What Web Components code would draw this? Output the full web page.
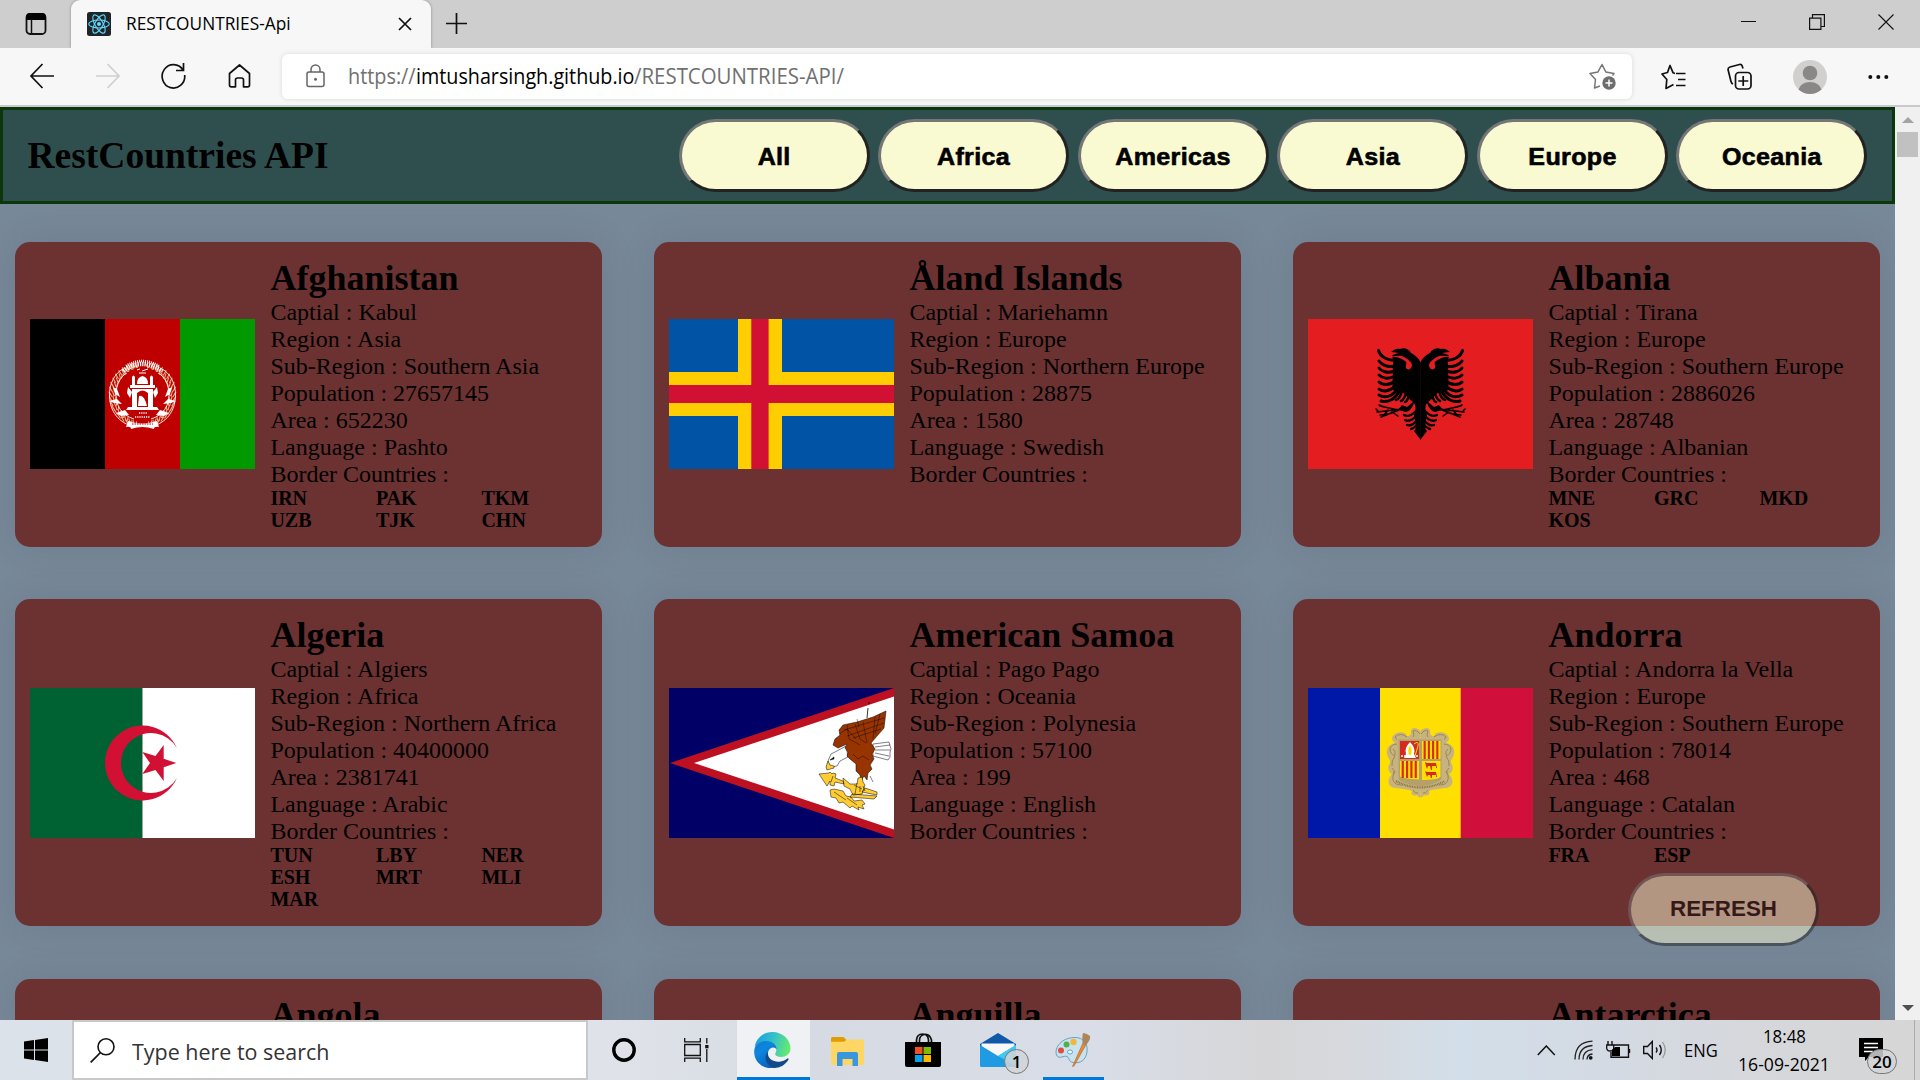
<!DOCTYPE html>
<html lang="en">
<head>
<meta charset="utf-8">
<title>RESTCOUNTRIES-Api</title>
<style>
html,body{margin:0;height:100%;overflow:hidden}
body{font-family:"Liberation Serif","Times New Roman",serif;color:#000}
</style>
</head>
<body>
<desktop-screen></desktop-screen>
<script>
const UI = '"Open Sans","Noto Sans",sans-serif';

function define(name, html, setup) {
  customElements.define(name, class extends HTMLElement {
    connectedCallback() {
      if (this.shadowRoot) return;
      const t = document.createElement('template');
      t.innerHTML = typeof html === 'function' ? html(this) : html;
      this.attachShadow({ mode: 'open' }).appendChild(t.content.cloneNode(true));
      if (setup) setup(this);
    }
  });
}

/* One line of text condensed or widened to a fixed advance width */
define('fit-text', `<style>
:host{display:block;white-space:pre;flex:none}
span{display:inline-block;transform-origin:0 50%}
</style><span><slot></slot></span>`, el => {
  const s = el.shadowRoot.querySelector('span');
  const w = +el.getAttribute('w');
  s.style.transform = `scaleX(${w / s.offsetWidth})`;
  el.style.width = w + 'px';
});

define('region-button', `<style>
:host{display:block;flex:none}
button{box-sizing:border-box;width:191px;height:73px;display:block;border-radius:37.5px;border:3px solid;
border-color:#767676 #222 #222 #767676;background:#fafad2;color:#000;padding:var(--drop,3px) 0 0;
font:bold var(--size,23px)/1 "Liberation Sans",Arial,sans-serif;letter-spacing:var(--track,.3px);-webkit-text-stroke:var(--stroke,.6px) #000}
span{display:inline-block;transform:scaleX(var(--wide,1.09))}
</style><button><span><slot></slot></span></button>`);

define('nav-bar', `<style>
:host{display:flex;box-sizing:border-box;height:97px;border:3px solid #0b370b;background:#2f4f4f;align-items:center;justify-content:space-between;padding:0 25px 0 24.5px}
h1{margin:0;font-size:37.5px;line-height:43px}
div{display:flex;gap:8.4px}
</style><h1>RestCountries API</h1><div>${['All','Africa','Americas','Asia','Europe','Oceania'].map(n => `<region-button>${n}</region-button>`).join('')}</div>`);

const eagleHalf = `
<path d="M112.7 44C111 39 107 36 103 34C101 30 96 28 92 30C88 29 86 31 83 33C87 33 89 34 91 34C88 35 85 35 84 37C89 37 93 36 96 38C99 40 103 42 104 46C104 50 100 52 98 49C97 46 100 44 97 42C94 40 88 37 84 38C87 41 84 46 85 52C85 58 84 66 85 71C89 74 93 72 97 75C100 79 102 81 105 83L99 88L94 86L90 91C93 92 95 92 98 93C102 92 104 89 106 84C108 86 108 92 106 96C107 104 110 108 106 112L112.7 121Z"/>
<g fill="none" stroke="#000" stroke-linecap="round" stroke-width="3">
<path d="M88 41C79 42 72 37 70.500 31.500M87 47C79 49 73 45 71 42M87 52C79 55 73 52 71 49M87 57C80 61 74 59 71 56M87 62C81 67 74 66 71 63M88 66C82 73 74 73 71 70M90 69C84 79 76 79 71 76M92 71C87 81 79 84 73 82"/>
<path stroke-width="2.600" d="M94 72Q92 80 88 81M98 74Q96 81 93 82M101 76Q99 83 97 83"/>
<path stroke-width="1.500" d="M94 90L69 93M90 91L72 87M91 91L73 98M70 92l-2-2M76 88l-5-2M79 95l-7 1M84 93l6 4M80 91l-4 5"/>
<path stroke-width="2.400" d="M108 92Q101 99 96 96M109 96Q102 104 97 101M110 100Q104 108 99 106M110 104Q107 109 103 110"/>
</g>`;

const wheat = Array.from({length:17}, (_, i) => {
  const a = (108 + i * 9.2) * Math.PI / 180, x = 112.5 + 30 * Math.cos(a), y = 76 + 30 * Math.sin(a);
  return `<path d="M${(x-3.6).toFixed(1)} ${(y-2.6).toFixed(1)}l3 5M${x.toFixed(1)} ${(y-3).toFixed(1)}l1.500 5M${(x+3.4).toFixed(1)} ${(y-2).toFixed(1)}l-1 4"/>`;
}).join('');
const afHalf = `<g fill="none" stroke="#e5b183" stroke-width="1.100">${wheat}</g>
<g fill="none" stroke="#fff" stroke-width=".9"><path d="M105 108C88 104 80 92 79.500 77C79 65 85 54 93 50M104 100C91 96 86 86 86 76C86 65 91 57 97 54"/></g>
<path fill="#fff" d="M83 68l4 2 3 8-5-3zM79 82l8-2 5 5-8-1zM86 94l9-3 4 5-8 1zM98 68l4 5-2 6-3-5z"/>`;

const stripes = (x, y, w, h, n) => `<path fill="#d52b1e" d="${Array.from({length:n}, (_, i) => `M${x + (i*2+1)*w/(2*n+1)} ${y}h${w/(2*n+1)}v${h}h-${w/(2*n+1)}z`).join('')}"/>`;
const andHalf = `<path d="M112.500 43C107 38 102 40 103 45C102 49 98 49 98 46C94 43 86 44 84 50C84 53 86 54 87 55C81 56 78 61 79 66C80 71 83 72 82 75C79 79 80 84 84 86C79 91 79 99 87 100C94 101 100 101 104 103C102 108 107 108 109 107C110 109 112 110 112.500 109Z"/>
<path fill="none" stroke="#9c874c" d="M112 46q-4-5-7-3q2 4 0 6M99 49q-7-5-12 0q2 4 5 4M90 56q-7 0-8 5q0 5 5 7q-4 5-3 10M87 83q-5 8 1 13q5 2 12 1M105 102q2 4 5 3M85 61q3 2 2 6M84 80q3 2 2 6"/>`;

const FLAGS = {
  af: `<path d="M0 0h75v150H0z"/><path fill="#bf0000" d="M75 0h75v150H75z"/><path fill="#090" d="M150 0h75v150h-75z"/>
    ${afHalf}<g transform="matrix(-1 0 0 1 225 0)">${afHalf}</g>
    <g fill="none" stroke="#fff"><path stroke-width="4.500" stroke-dasharray="1.300 1" d="M93 52Q112 38 132 52"/><path stroke-width="2.500" stroke-dasharray="1 1" d="M96 47Q112 37 129 47"/><path d="M107 51l3-1m2 2l6-2m-9 4h7"/></g>
    <path fill="#fff" d="M107 65q0-7 5.500-8q5.500 1 5.500 8zM102 58q1.500-3 3 0v8h-3zM120 58q1.500-3 3 0v8h-3zM100 66h25v3h-25zM102 70h5v18h-5zM118 70h5v18h-5zM107 70h11v4q-5.500-5-11 0zM98 88h29l2 3H96zM109 77q5-2 8 10h-9z"/>
    <path stroke="#fff" stroke-width="1.600" stroke-dasharray="1.200 1" d="M109 94h8M105 98h15"/>
    <path fill="#fff" d="M98 102q14 5 29 0l2 6q-5-1-5 2q-12-4-23 0q0-3-5-2z"/><path stroke="#bf0000" stroke-dasharray="1.500 1" d="M102 105h21"/>`,
  ax: `<path fill="#0053a5" d="M0 0h225v150H0z"/><path fill="#ffce00" d="M69 0h44v53h112v44H113v53H69V97H0V53h69z"/><path fill="#d21034" d="M82.300 0h17.300v66H225v18H99.600v66H82.300V84H0V66h82.300z"/>`,
  al: `<path fill="#e41e20" d="M0 0h225v150H0z"/>${eagleHalf}<g transform="matrix(-1 0 0 1 225 0)">${eagleHalf}</g>`,
  dz: `<path fill="#006233" d="M0 0h112.500v150H0z"/><path fill="#fff" d="M112.500 0H225v150H112.500z"/>
    <path fill="#d21034" d="M146.900 60A37.500 37.500 0 1 0 146.900 90A30 30 0 1 1 146.900 60zM146.300 75L133.700 79.200L133.700 93L125.500 82L112.300 86L120 75L112.300 64L125.500 68L133.700 57L133.700 70.800Z"/>`,
  as: `<path fill="#006" d="M0 0h225v150H0z"/><path fill="#bd1021" d="M1 75L225 0v150z"/><path fill="#fff" d="M25 75L225 8.500v133z"/>
    <g stroke="#000" stroke-width=".5" stroke-linejoin="round">
    <path fill="#fff" d="M204 56l16-2 2 7-1 3v5l-2 3-15-4z"/><path fill="none" d="M206 59l15-2M206 62l15 0M206 65l14 3"/>
    <path fill="#fff" d="M177 58l-9 5-6 3-3 7 2 6 7-1 3-5 8-4z"/><path d="M161 72l4-3v2z"/>
    <path fill="#fc3" d="M159 73l-2 6 1 3 7-2v-2l-4-1z"/>
    <path fill="#983400" d="M217 23L215 40L208 48L202 55L206 61L203 66L205 71L201 77L203 81L199 85L198 92L195 88L192 93L191 87L187 83L187 76L181 71L178 68L179 64L176 60L178 56L169 60L164 57L166 51L171 47L170 42L174 37L188 34L204 29Z"/>
    <path fill="none" stroke-width=".4" d="M170 46l8-5 9 10M178 37l2 14 11 6M186 36l5 15 6 4M194 34l4 21M206 29l-2 22M211 26l-5 20M175 42l40-12M178 48l37-13M184 50l28-9M184 66l5 5 5-3 6 4M188 31l2 8"/>
    <path fill="none" stroke-width=".8" d="M200 14v2M199 20l-1 10"/>
    <path fill="#fc3" d="M189 90l4-1 1 5 2 3-3 9-9 1-3-6-6-3-1-8 7 6 7 0zM150 86l10-1 1-1 2 2 1-1 3 1-1 4 8 3 1 3-9-2-1 4-4-1v-4l-3 5zM161 102l4-1 9 2 3 5 5 1 3 4 8-1 3 4-3 1 2 4-6-2 1 3-7-4-2 2-7-6-4 1-3-5-5-1zM183 106l25 2-3 3-24-2zM196 100l12 4v3l-15-3z"/>
    <path fill="none" d="M165 104l12 8M178 110l10 7M185 97l8 4M188 95l-2 11M164 88l-2 6M191 98v6M194 98l2 5M201 88l3 6"/></g>`,
  ad: `<path fill="#0018a8" d="M0 0h72v150H0z"/><path fill="#ffdf00" d="M72 0h81v150H72z"/><path fill="#d0103a" d="M152.700 0H225v150h-72.300z"/>
    <g fill="#c7b37f">${andHalf}<g transform="matrix(-1 0 0 1 225 0)">${andHalf}</g><path d="M89 50h47v44q-22 18-47 0z"/></g>
    <path fill="#b5a06a" d="M90.500 51.500h43v39q-2 5-21 8q-20-3-22-8z"/>
    <path fill="#d52b1e" d="M92 53h19v18H92z"/><path fill="#ffdf00" d="M114 53h18.500v18H114zM92 73h19v18.500q-17-1-19-3zM114 73h18.500v16q-3 3-18.500 3z"/>
    ${stripes(113.5,53,19,18,4)}${stripes(91.5,73,19.500,17,4)}
    <path fill="#fff" d="M102 54q6 6 4 12l2 4h-12l2-4q-2-6 4-12z"/><path fill="#ffdf00" d="M102 57q3 5 1 10h-2q-2-5 1-10z"/><path stroke="#fff" stroke-width="1.500" stroke-dasharray="2 1" d="M93 68h17"/><path fill="none" stroke="#ffdf00" d="M106 56q5-4 4 2l-3 10"/>
    <path fill="#d52b1e" d="M117 74l2 1 9 0 1 5h-1v-2l-4 0 0 4h-1l-1-4-2 0-1 3-1-3zM117 83l2 1 9 0 1 5h-1v-2l-4 0 0 3h-1l-1-3-2 0-1 2-1-3z"/>
    <path fill="none" stroke="#8c7740" stroke-width="2.200" stroke-dasharray="1 .7" d="M88 93Q112 106 137 93"/>`
};

define('country-card', el => {
  const d = (el.dataset.info || '').split('|'), keys = ['Captial','Region','Sub-Region','Population','Area','Language'];
  const borders = (el.dataset.borders || '').split(' ').filter(Boolean);
  return `<style>
:host{display:grid;box-sizing:border-box;grid-template-columns:225px 316px;gap:15.4px;padding:15px;border-radius:15px;background:#6c3232;align-items:center;box-shadow:0 0 40px rgba(0,0,0,.09)}
svg{display:block;width:225px;height:150px}
:host([short]) svg{margin-bottom:1px}
.info{align-self:start}
h2{margin:0;padding-top:1px;font-size:36px;line-height:41px;white-space:nowrap}
p{margin:0;font-size:24px;line-height:27px;white-space:nowrap}
.b{display:grid;grid-template-columns:repeat(3,105.500px);font-size:20px;line-height:22px;font-weight:bold;margin-top:-1px}
</style><svg viewBox="0 0 225 150">${FLAGS[el.dataset.flag]}</svg>
<div class="info"><h2>${el.dataset.name}</h2>${keys.map((k, i) => `<p>${k} : ${d[i] || ''}</p>`).join('')}<p>Border Countries :</p>
<div class="b">${borders.map(b => `<span>${b}</span>`).join('')}</div></div>`;
});

const COUNTRIES = [
  ['af','Afghanistan','Kabul|Asia|Southern Asia|27657145|652230|Pashto','IRN PAK TKM UZB TJK CHN'],
  ['ax','Åland Islands','Mariehamn|Europe|Northern Europe|28875|1580|Swedish',''],
  ['al','Albania','Tirana|Europe|Southern Europe|2886026|28748|Albanian','MNE GRC MKD KOS'],
  ['dz','Algeria','Algiers|Africa|Northern Africa|40400000|2381741|Arabic','TUN LBY NER ESH MRT MLI MAR'],
  ['as','American Samoa','Pago Pago|Oceania|Polynesia|57100|199|English',''],
  ['ad','Andorra','Andorra la Vella|Europe|Southern Europe|78014|468|Catalan','FRA ESP']
];
/* The third row shows only the top of its cards */
define('card-peek', el => `<style>
:host{display:block;height:60px;margin-top:1px;box-sizing:border-box;padding:16px 0 0 255.400px;border-radius:15px 15px 0 0;background:#6c3232;box-shadow:0 0 40px rgba(0,0,0,.09)}
h2{margin:0;font-size:36px;line-height:41px}
</style><h2>${el.dataset.name}</h2>`);

define('country-grid', `<style>
:host{display:grid;grid-template-columns:repeat(3,587px);grid-template-rows:305px 327px auto;gap:52px;padding:38px 15px 0;align-content:start}
</style>${COUNTRIES.map((c, i) => `<country-card ${i < 3 ? 'short' : ''} data-flag="${c[0]}" data-name="${c[1]}" data-info="${c[2]}" data-borders="${c[3]}"></country-card>`).join('')}
${['Angola','Anguilla','Antarctica'].map(n => `<card-peek data-name="${n}"></card-peek>`).join('')}`);

define('page-scrollbar', `<style>
:host{display:flex;flex-direction:column;align-items:center;width:25px;flex:none;background:#f0f0f0;box-sizing:border-box;padding:10px 0 9px}
i{width:21px;height:25px;background:#c1c1c1;margin-top:9px}
.s{flex:1}svg{display:block}
</style><svg width="12" height="6"><path fill="#a3a3a3" d="M0 6L6 0l6 6z"/></svg><i></i><div class="s"></div><svg width="12" height="6"><path fill="#505050" d="M0 0h12L6 6z"/></svg>`);

define('web-page', `<style>
:host{display:flex;height:913px;overflow:hidden;background:#789}
main{flex:1;position:relative;overflow:hidden}
.refresh{position:absolute;left:1628px;top:766px;opacity:.5;--size:22.4px;--track:0;--stroke:0;--wide:1;--drop:0px}
</style><main><nav-bar></nav-bar><country-grid></country-grid><region-button class="refresh">REFRESH</region-button></main><page-scrollbar></page-scrollbar>`);

define('tab-strip', `<style>
:host{display:flex;height:48px;background:#cecece;align-items:stretch}
svg{display:block;flex:none;fill:none;stroke:#111}
.act{width:71px;display:flex;align-items:center;justify-content:center;box-sizing:border-box;padding-left:1px}
.tab{width:360px;box-sizing:border-box;background:#f7f7f7;border-radius:9px 9px 0 0;display:flex;align-items:center;padding:0 19px 0 16px;box-shadow:0 0 3px rgba(0,0,0,.35);clip-path:inset(0 -4px 0 -4px)}
fit-text{font:18px/24px ${UI};margin:-2px 0 0 15px}
.g{flex:1}.plus{margin:auto 0 auto 15px;position:relative;top:-1px}
.win{display:flex;align-items:center;gap:53px;padding-right:26px;height:43px}
</style><div class="act"><svg width="22" height="24" viewBox="0 0 22 24"><rect x="1.500" y="2" width="19" height="20" rx="3.500" stroke-width="1.800"/><path fill="#000" stroke="none" d="M1 8V5q0-4 4-4h12q4 0 4 4v3z"/><path stroke-width="1.500" d="M6.500 7v15"/></svg></div>
<div class="tab"><svg width="24" height="24" viewBox="0 0 24 24"><rect width="24" height="24" rx="2.500" fill="#20232a" stroke="none"/><g stroke="#61dafb" stroke-width="1.100"><ellipse cx="12" cy="12" rx="10.300" ry="4"/><ellipse cx="12" cy="12" rx="10.300" ry="4" transform="rotate(60 12 12)"/><ellipse cx="12" cy="12" rx="10.300" ry="4" transform="rotate(120 12 12)"/></g><circle cx="12" cy="12" r="2" fill="#61dafb" stroke="none"/></svg>
<fit-text w="165">RESTCOUNTRIES-Api</fit-text><div class="g"></div><svg width="14" height="14" viewBox="0 0 14 14"><path stroke-width="1.700" d="M1 1l12 12M13 1L1 13"/></svg></div>
<svg class="plus" width="21" height="21" viewBox="0 0 21 21"><path stroke-width="1.700" d="M10.500 0v21M0 10.500h21"/></svg>
<div class="g"></div><div class="win"><svg width="16" height="16"><path d="M1 7.500h15"/></svg><svg width="16" height="16"><path stroke-width="1.200" d="M.6 4.100h11.300v11.300H.6zM3.500 4V.6h11.900v11.900H12"/></svg><svg width="16" height="16"><path stroke-width="1.100" d="M.5.5l15 15M15.500.5l-15 15"/></svg></div>`);

define('address-toolbar', `<style>
:host{display:flex;box-sizing:border-box;height:59px;background:#f7f7f7;border-bottom:2px solid #c9cacb;align-items:center;padding-left:30px;padding-right:31px}
svg{display:block;flex:none;fill:none;stroke:#111;stroke-width:1.7}
.nav{display:flex;gap:41.700px;width:252px;margin-top:-1px}
.box{width:1350px;box-sizing:border-box;height:45px;border-radius:6px;background:#fff;box-shadow:0 0 5px rgba(0,0,0,.12);display:flex;align-items:center;padding:0 16px 0 24px;margin-top:-1px}
.url{display:flex;font:21px/30px ${UI};margin-left:23px;flex:1;color:#707070}.url b{font-weight:400;color:#000}
.r{display:flex;align-items:center;flex:1;justify-content:space-between;padding-left:29px}
</style><div class="nav"><svg width="24" height="26" viewBox="0 0 24 26"><path d="M24 13H1M12.500 1L1 13l11.500 12"/></svg>
<svg width="24" height="26" viewBox="0 0 24 26" style="stroke:#d0d0d0"><path d="M0 13h23M11.500 1L23 13 11.500 25"/></svg>
<svg width="25" height="26" viewBox="0 0 25 26"><path d="M22 7A11.300 11.700 0 1 0 23.700 12M22.500 0v7.500H15"/></svg>
<svg width="23" height="26" viewBox="0 0 23 26"><path stroke-linejoin="round" d="M1.500 10.500L11.500 2l10 8.500V22q0 1.800-1.800 1.800h-4.200V17q0-2-2-2h-4q-2 0-2 2v6.800H3.300q-1.800 0-1.800-1.800z"/></svg></div>
<div class="box"><svg width="19" height="24" viewBox="0 0 19 24" style="stroke:#666;stroke-width:1.500"><rect x="1" y="8" width="17" height="14.500" rx="2"/><path d="M5 8V5.500a4.500 4.500 0 0 1 9 0V8"/><circle cx="9.500" cy="15.200" r="1.500" fill="#666" stroke="none"/></svg>
<div class="url"><fit-text w="68">https://</fit-text><fit-text w="218"><b>imtusharsingh.github.io</b></fit-text><fit-text w="210">/RESTCOUNTRIES-API/</fit-text></div>
<svg width="27" height="27" viewBox="0 0 27 27" style="stroke:#767676;stroke-width:1.500"><path stroke-linejoin="round" d="M11 23L5.500 25l1-8.500L1 10.500l8-1.600L13 1.500l3.800 7.400L25 10.500l-1.500 2"/><circle cx="20" cy="20" r="6.700" fill="#6e6e6e" stroke="none"/><path stroke="#fff" d="M20 16.500v7M16.500 20h7"/></svg></div>
<div class="r"><svg width="25" height="26" viewBox="0 0 25 26"><path stroke-linejoin="round" d="M14 9.500l-2-.8L9 1.500 6.500 8.500 1 10l4.800 5.500L5 24.500l7.500-4M15 9.500h9.500M17 15.500h7.500M15 21.500h9.500"/></svg>
<svg width="25" height="28" viewBox="0 0 25 28"><rect x="8.500" y="9.500" width="15.500" height="16.500" rx="3.500"/><path d="M16.200 13v10M11.300 18h10M16 5.500l-.8-2.500q-.7-2-2.700-1.500L3 4Q.5 4.800 1.200 7.200L4 18.500q.5 2 2 2.500"/></svg>
<svg width="34" height="34" viewBox="0 0 34 34" stroke="none"><g stroke="none"><circle cx="17" cy="17" r="17" fill="#d2d0ce"/><circle cx="17" cy="13" r="7.300" fill="#8a8886"/><path fill="#8a8886" d="M5.500 29.500Q8 22 17 22t11.500 7.500Q23 34 17 34T5.500 29.500z"/></g></svg>
<svg width="21" height="6" viewBox="0 0 21 6"><g fill="#111" stroke="none"><circle cx="2.300" cy="3" r="2"/><circle cx="10.300" cy="3" r="2"/><circle cx="18.300" cy="3" r="2"/></g></svg></div>`);

define('task-cell', `<style>
:host{display:flex;width:72px;height:60px;box-sizing:border-box;align-items:center;justify-content:center;position:relative;flex:none}
:host([app]){width:73px;margin-right:2px;padding-right:2px}
:host([active]){background:#f0f1f5;border-bottom:3px solid #0078d7;padding-top:3px}
:host([open])::after{content:"";position:absolute;left:6px;width:61px;bottom:0;height:3px;background:#0078d7}
::slotted(svg){display:block;fill:none}
</style><slot></slot>`);

define('count-badge', `<style>
:host{position:absolute;box-sizing:border-box;height:25px;border:1px solid #777;border-radius:13px;background:rgba(210,211,215,.85);display:flex;align-items:center;justify-content:center;font:600 17px/24px ${UI}}
</style><slot></slot>`);

define('task-bar', `<style>
:host{display:flex;height:60px;align-items:center;background:linear-gradient(90deg,#dce2e9 0,#dfe3e9 32%,#d6dae2 42%,#d8dde7 57%,#d6d6d8 66%,#d7d9dd 70%,#d2dee9 76%,#d4dae3 84%,#d6d7da 93%,#d6d6d6)}
svg{display:block;flex:none;fill:none}
.search{width:516px;height:60px;box-sizing:border-box;background:#fff;border:2px solid #c8c8c8;display:flex;align-items:center;padding-left:16px}
.search fit-text{font:22px/30px ${UI};color:#333;margin:2px 0 0 17px}
.tray{display:flex;align-items:center;flex:1;padding-left:425px;height:60px}
.clock{width:92px;margin-left:20px;display:flex;flex-direction:column;align-items:center;font:18px/27px ${UI};gap:1px}
.tray .lang{font:18.500px/26px ${UI};margin-left:17px}
.ac{position:relative;margin-left:29px;width:55px}
.end{width:1px;height:60px;background:#aaa}
</style>
<task-cell><svg width="24" height="24" viewBox="0 0 24 24"><path fill="#000" d="M0 3.500L10 2v9.500H0zM11 1.900L24 0v11.500H11zM0 12.500h10V22L0 20.500zM11 12.500h13V24l-13-1.900z"/></svg></task-cell>
<div class="search"><svg width="25" height="25" viewBox="0 0 25 25"><circle cx="16" cy="8.800" r="8" stroke="#111" stroke-width="1.600"/><path stroke="#111" stroke-width="1.700" d="M10.500 14.500L.7 24.300"/></svg><fit-text w="197">Type here to search</fit-text></div>
<task-cell><svg width="24" height="24"><circle cx="12" cy="12" r="10.200" stroke="#000" stroke-width="3.400"/></svg></task-cell>
<task-cell style="margin-right:5px"><svg width="25" height="24" viewBox="0 0 25 24"><path stroke="#111" stroke-width="1.300" d="M.7 0v3.800h15.600V0M.7 6.500h15.600v11H.7zM.7 24v-3.800h15.600V24M22.800 0v5.500M22.800 11v13"/><path fill="#111" d="M21.200 7h3.300v3.300h-3.300z"/></svg></task-cell>
<task-cell app active><svg width="37" height="36" viewBox="0 0 37 36"><defs><linearGradient id="e1" x1="0" y1=".3" x2="1" y2=".5"><stop stop-color="#1b9de2"/><stop offset=".5" stop-color="#35c1c9"/><stop offset="1" stop-color="#66eb6e"/></linearGradient><linearGradient id="e2" x1="0" y1="0" x2=".6" y2="1"><stop stop-color="#0d78d0"/><stop offset=".4" stop-color="#0d86de"/><stop offset="1" stop-color="#0a5fc0"/></linearGradient></defs>
<path fill="url(#e1)" d="M.8 15C2 6 9.500 0 18.500 0C29 0 36.500 8 36.500 16.500C36.500 22 32 25 27 25C22.500 25 20.500 23 21.500 21C24 17 21 11 14 10C8 9.500 3 12 .8 15z"/>
<path fill="url(#e2)" d="M.3 18C1 12 6.500 9 12 9C19 9 23 13.500 22.500 17.500C21 14 15 15 14 20.500C13 27 17 33 23 35C10 39 -1 30 .3 18z"/>
<path fill="#114a8b" d="M14 20C13 27 20 30.500 26.500 29.500C30 29 32 27.500 33.500 26.500C34.500 26 35 27 34.300 28C31 33 26 36 20 36C12 34 9 24 14 20z"/></svg></task-cell>
<task-cell app><svg width="33" height="32" viewBox="0 0 33 32"><path fill="#e09c00" d="M0 4.500Q0 3 1.500 3h11l3 3v6H0z"/><path fill="#fdd663" d="M0 8h13l3-2.500h15.500Q33 5.500 33 7v24.500Q33 33 31.500 33h-30Q0 33 0 31.500z" transform="matrix(1 0 0 .93 0 .4)"/><path fill="#3a96dd" d="M6 21q0-2 2-2h17q2 0 2 2v13h-5.500v-7.500h-10V34H6z" transform="matrix(1 0 0 .93 0 .4)"/></svg></task-cell>
<task-cell app><svg width="36" height="35" viewBox="0 0 36 35"><path stroke="#111" stroke-width="1.700" d="M11.500 10V7q.5-6 6-6t6 6v3M14.500 10V7q0-4.500 5-5.500t7 5.500v3"/><path fill="#000" d="M0 9h36v23q0 2-2 2H2q-2 0-2-2z"/><path fill="#f25022" d="M10 14h7.500v7H10z"/><path fill="#7fba00" d="M18.500 14H26v7h-7.500z"/><path fill="#00a4ef" d="M10 22h7.500v7H10z"/><path fill="#ffb900" d="M18.500 22H26v7h-7.500z"/></svg></task-cell>
<task-cell app><svg width="36" height="34" viewBox="0 0 36 34"><path fill="#0f59a8" d="M0 11L18 0l18 11v3l-18 7L0 14z"/><path fill="#f8f8f8" d="M1.500 10.500h33v8L18 24 1.500 18z"/><path fill="#1e9be2" d="M0 12l18 11L36 12v20.500q0 1.500-1.500 1.500h-33Q0 34 0 32.500z"/><path fill="#3ccbf4" d="M36 12L18 23l18 10z"/></svg><count-badge style="left:42px;top:29px;width:25px">1</count-badge></task-cell>
<task-cell app open><svg width="36" height="36" viewBox="0 0 36 36"><path fill="#c5e3f1" stroke="#6d9fbd" d="M19 5.500C29 5 33 12 32 20C31 28 25 32 18 30.500C13 29.500 15 26 12 24.500C9 23 4 28 1.500 23C-1 15 7 6 19 5.500z"/><circle cx="6" cy="18.500" r="3" fill="#e34b3f"/><circle cx="11.500" cy="12.500" r="3" fill="#52b04a"/><circle cx="18.500" cy="10" r="3.200" fill="#f3b73b"/><ellipse cx="15" cy="20" rx="2.500" ry="2" fill="#f4f8fb" stroke="#6d9fbd"/><path fill="#e98a35" stroke="#b4631d" stroke-width=".6" d="M27.500 12l3 1.500L19 34l-1.500.5z"/><path fill="#ad855b" d="M27.500 12Q27 4 28 1q3 0 7 3q1 4-4.500 9.500z"/></svg></task-cell>
<div class="tray">
<svg width="19" height="11"><path stroke="#111" stroke-width="1.500" d="M.8 10L9.300 1l8.500 9"/></svg>
<svg width="20" height="20" viewBox="0 0 20 20" style="margin-left:18px"><g stroke="#222" stroke-width="1.300"><path d="M1 19.500Q1 2 18.500 1.200M5 19.500Q5 6.500 18.500 5.500M9 19.500Q9 10.500 18.500 9.700M13 19.500Q13 14.500 18.500 14"/></g><circle cx="16.700" cy="17.800" r="1.900" fill="#111"/></svg>
<svg width="25" height="18" viewBox="0 0 25 18" style="margin-left:12px"><path stroke="#111" stroke-width="1.400" d="M8 4h14.500v12.300H5V11M23.500 8v4M2 0v4M6 0v4"/><path stroke="#111" stroke-width="1.300" d="M.7 4h7v3q0 3-3.500 3T.7 7z"/><path fill="#000" d="M6 9l3-3h5v9H6z"/></svg>
<svg width="24" height="20" viewBox="0 0 24 20" style="margin-left:12px"><path stroke="#111" stroke-width="1.400" d="M.7 6.500h3.800L9.300 1.500v17l-4.800-5H.7zM13 7.500q2 2.500 0 5M16.500 5q3.500 5 0 10"/><path stroke="#999" stroke-width="1.300" d="M19.500 2q5.500 8 0 16"/></svg>
<fit-text class="lang" w="34">ENG</fit-text>
<div class="clock"><fit-text w="43">18:48</fit-text><fit-text w="92">16-09-2021</fit-text></div>
<div class="ac"><svg width="24" height="24" viewBox="0 0 24 24"><path fill="#000" d="M0 0h24v19H10l-4 4v-4H0z"/><path stroke="#fff" stroke-width="1.300" d="M5 5.500h14M5 9.500h14M5 13.500h9"/></svg><count-badge style="left:8px;top:11px;width:30px">20</count-badge></div>
<div class="end"></div></div>`);

define('desktop-screen', `<style>:host{display:flex;flex-direction:column;width:1920px;height:1080px;overflow:hidden}</style>
<tab-strip></tab-strip><address-toolbar></address-toolbar><web-page></web-page><task-bar></task-bar>`);
</script>
</body>
</html>
